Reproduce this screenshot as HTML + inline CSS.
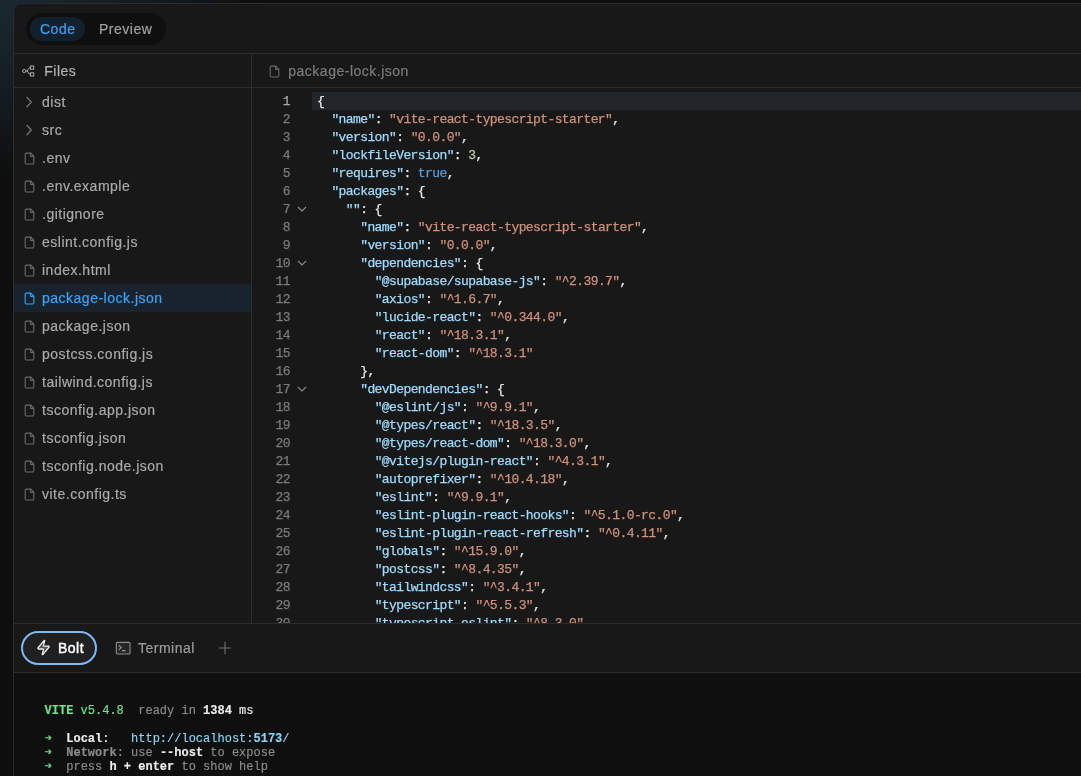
<!DOCTYPE html>
<html><head><meta charset="utf-8">
<style>
*{box-sizing:border-box;margin:0;padding:0}
html,body{width:1081px;height:776px;overflow:hidden}
body{background:#0e0e0e;font-family:"Liberation Sans",sans-serif;position:relative;letter-spacing:0.5px}
.bgglow{position:absolute;left:0;top:0;width:1081px;height:776px;background:radial-gradient(ellipse 260px 175px at 0 0,#1a2830 0%,#151d23 50%,#0e0e0e 100%)}
.panel{will-change:transform;position:absolute;left:13px;top:3px;width:1100px;height:800px;background:#181818;border:1px solid #2c2c2c;border-radius:8px 0 0 0;overflow:hidden}
.hdr{position:absolute;left:0;top:0;width:1100px;height:50px;border-bottom:1px solid #2c2c2c}
.seg{position:absolute;left:12px;top:9px;width:140px;height:32px;border-radius:16px;background:#0f0f0f}
.seg .a{position:absolute;left:4px;top:4px;width:55px;height:24px;border-radius:12px;background:#11202c}
.seg span{position:absolute;top:8px;font-size:14px;line-height:16px;-webkit-text-stroke:0.2px}
.side{position:absolute;left:0;top:50px;width:238px;height:569px;border-right:1px solid #2c2c2c}
.sh{position:absolute;left:0;top:0;width:237px;height:34px;border-bottom:1px solid #2c2c2c}
.sh span{position:absolute;left:30.3px;top:9px;font-size:14px;color:#b4b4b4;line-height:16px;-webkit-text-stroke:0.2px}
.sh svg{position:absolute;left:8px;top:11px}
.fl{position:absolute;left:0;top:34px;width:237px}
.fi{position:relative;height:28px;font-size:14px;color:#a9a9a9;-webkit-text-stroke:0.2px;line-height:28px;padding-left:28px;white-space:nowrap}
.fi svg{position:absolute;left:9px;top:8px}
.fi.sel{background:#18232d;color:#3aa3f7}
.ed{position:absolute;left:238px;top:50px;width:900px;height:569px;overflow:hidden}
.eh{position:absolute;left:0;top:0;width:900px;height:34px;border-bottom:1px solid #2c2c2c}
.eh span{position:absolute;left:36.3px;top:8.8px;font-size:14px;color:#7c7c7c;line-height:16px;-webkit-text-stroke:0.2px}
.eh svg{position:absolute;left:16.4px;top:10.5px}
.code{position:absolute;left:0;top:38px;width:900px;height:531px;font-family:"Liberation Mono",monospace;font-size:13px;letter-spacing:-0.6px;line-height:18px;color:#e6e6e6;white-space:pre;-webkit-text-stroke:0.25px}
.code>div,.code>svg{position:absolute}
.ln{left:0;width:38px;text-align:right;color:#7a7a7a;margin-top:1px}
.ln.cur{color:#a8a8a8}
.tx{left:65px;margin-top:1px}
.hl{left:60px;width:840px;height:18px;background:#22252a}
.fold{left:45.2px}
.k{color:#9cdcfe}.s{color:#ce9178}.n{color:#b5cea8}.b{color:#569cd6}
.bot{position:absolute;left:0;top:619px;width:1100px;height:200px;border-top:1px solid #2c2c2c}
.tb{position:absolute;left:0;top:0;width:1100px;height:49px;border-bottom:1px solid #2c2c2c}
.pill{position:absolute;left:7px;top:7px;width:76px;height:34px;border-radius:17px;border:2px solid #7db9f5;background:#202020}
.tb span{position:absolute;font-size:14px;line-height:16px;-webkit-text-stroke:0.2px}
.term{position:absolute;left:0;top:49px;width:1100px;height:200px;background:#0f0f0f}
.tt{letter-spacing:0;position:absolute;left:30.6px;font-family:"Liberation Mono",monospace;font-size:12px;line-height:14px;white-space:pre;color:#8c8c8c;-webkit-text-stroke:0.15px}
.tt b{font-weight:bold}
.g{color:#6ae68a}.gw{color:#ececec}.cy{color:#86d6f6}.ar{color:#62d27e}
</style></head><body>
<div class="bgglow"></div>
<div class="panel">
  <div class="hdr">
    <div class="seg"><div class="a"></div>
      <span style="left:14px;color:#3aa2f5">Code</span>
      <span style="left:73px;color:#a2a2a2">Preview</span>
    </div>
  </div>
  <div class="side">
    <div class="sh"><svg width="13" height="12" viewBox="0 0 13 12"><circle cx="2.2" cy="6" r="1.6" fill="none" stroke="#a8a8a8" stroke-width="1"/><rect x="8.5" y="1" width="3.2" height="3.2" fill="none" stroke="#a8a8a8" stroke-width="1"/><rect x="8.5" y="7.8" width="3.2" height="3.2" fill="none" stroke="#a8a8a8" stroke-width="1"/><path d="M3.8 6 H5.4 M5.2 6 Q6.2 2.8 8.5 2.6 M5.2 6 Q6.2 9.2 8.5 9.4" fill="none" stroke="#a8a8a8" stroke-width="1"/></svg><span>Files</span></div>
    <div class="fl">
<div class="fi"><svg width="12" height="13" viewBox="0 0 12 13"><path d="M4 1.5 L8.3 6.1 L4 10.7" fill="none" stroke="#707070" stroke-width="1.4" stroke-linecap="round" stroke-linejoin="round"/></svg>dist</div>
<div class="fi"><svg width="12" height="13" viewBox="0 0 12 13"><path d="M4 1.5 L8.3 6.1 L4 10.7" fill="none" stroke="#707070" stroke-width="1.4" stroke-linecap="round" stroke-linejoin="round"/></svg>src</div>
<div class="fi"><svg style="left:8.7px;top:7.8px" width="13" height="13" viewBox="0 0 24 24"><path d="M14.5 2H6a2 2 0 0 0-2 2v16a2 2 0 0 0 2 2h12a2 2 0 0 0 2-2V7.5Z" fill="none" stroke="#6c6c6c" stroke-width="2" stroke-linejoin="round"/><path d="M14 2.5v5.5h5.5" fill="none" stroke="#6c6c6c" stroke-width="2" stroke-linejoin="round" stroke-linecap="round"/></svg>.env</div>
<div class="fi"><svg style="left:8.7px;top:7.8px" width="13" height="13" viewBox="0 0 24 24"><path d="M14.5 2H6a2 2 0 0 0-2 2v16a2 2 0 0 0 2 2h12a2 2 0 0 0 2-2V7.5Z" fill="none" stroke="#6c6c6c" stroke-width="2" stroke-linejoin="round"/><path d="M14 2.5v5.5h5.5" fill="none" stroke="#6c6c6c" stroke-width="2" stroke-linejoin="round" stroke-linecap="round"/></svg>.env.example</div>
<div class="fi"><svg style="left:8.7px;top:7.8px" width="13" height="13" viewBox="0 0 24 24"><path d="M14.5 2H6a2 2 0 0 0-2 2v16a2 2 0 0 0 2 2h12a2 2 0 0 0 2-2V7.5Z" fill="none" stroke="#6c6c6c" stroke-width="2" stroke-linejoin="round"/><path d="M14 2.5v5.5h5.5" fill="none" stroke="#6c6c6c" stroke-width="2" stroke-linejoin="round" stroke-linecap="round"/></svg>.gitignore</div>
<div class="fi"><svg style="left:8.7px;top:7.8px" width="13" height="13" viewBox="0 0 24 24"><path d="M14.5 2H6a2 2 0 0 0-2 2v16a2 2 0 0 0 2 2h12a2 2 0 0 0 2-2V7.5Z" fill="none" stroke="#6c6c6c" stroke-width="2" stroke-linejoin="round"/><path d="M14 2.5v5.5h5.5" fill="none" stroke="#6c6c6c" stroke-width="2" stroke-linejoin="round" stroke-linecap="round"/></svg>eslint.config.js</div>
<div class="fi"><svg style="left:8.7px;top:7.8px" width="13" height="13" viewBox="0 0 24 24"><path d="M14.5 2H6a2 2 0 0 0-2 2v16a2 2 0 0 0 2 2h12a2 2 0 0 0 2-2V7.5Z" fill="none" stroke="#6c6c6c" stroke-width="2" stroke-linejoin="round"/><path d="M14 2.5v5.5h5.5" fill="none" stroke="#6c6c6c" stroke-width="2" stroke-linejoin="round" stroke-linecap="round"/></svg>index.html</div>
<div class="fi sel"><svg style="left:8.7px;top:7.8px" width="13" height="13" viewBox="0 0 24 24"><path d="M14.5 2H6a2 2 0 0 0-2 2v16a2 2 0 0 0 2 2h12a2 2 0 0 0 2-2V7.5Z" fill="none" stroke="#3aa3f7" stroke-width="2" stroke-linejoin="round"/><path d="M14 2.5v5.5h5.5" fill="none" stroke="#3aa3f7" stroke-width="2" stroke-linejoin="round" stroke-linecap="round"/></svg>package-lock.json</div>
<div class="fi"><svg style="left:8.7px;top:7.8px" width="13" height="13" viewBox="0 0 24 24"><path d="M14.5 2H6a2 2 0 0 0-2 2v16a2 2 0 0 0 2 2h12a2 2 0 0 0 2-2V7.5Z" fill="none" stroke="#6c6c6c" stroke-width="2" stroke-linejoin="round"/><path d="M14 2.5v5.5h5.5" fill="none" stroke="#6c6c6c" stroke-width="2" stroke-linejoin="round" stroke-linecap="round"/></svg>package.json</div>
<div class="fi"><svg style="left:8.7px;top:7.8px" width="13" height="13" viewBox="0 0 24 24"><path d="M14.5 2H6a2 2 0 0 0-2 2v16a2 2 0 0 0 2 2h12a2 2 0 0 0 2-2V7.5Z" fill="none" stroke="#6c6c6c" stroke-width="2" stroke-linejoin="round"/><path d="M14 2.5v5.5h5.5" fill="none" stroke="#6c6c6c" stroke-width="2" stroke-linejoin="round" stroke-linecap="round"/></svg>postcss.config.js</div>
<div class="fi"><svg style="left:8.7px;top:7.8px" width="13" height="13" viewBox="0 0 24 24"><path d="M14.5 2H6a2 2 0 0 0-2 2v16a2 2 0 0 0 2 2h12a2 2 0 0 0 2-2V7.5Z" fill="none" stroke="#6c6c6c" stroke-width="2" stroke-linejoin="round"/><path d="M14 2.5v5.5h5.5" fill="none" stroke="#6c6c6c" stroke-width="2" stroke-linejoin="round" stroke-linecap="round"/></svg>tailwind.config.js</div>
<div class="fi"><svg style="left:8.7px;top:7.8px" width="13" height="13" viewBox="0 0 24 24"><path d="M14.5 2H6a2 2 0 0 0-2 2v16a2 2 0 0 0 2 2h12a2 2 0 0 0 2-2V7.5Z" fill="none" stroke="#6c6c6c" stroke-width="2" stroke-linejoin="round"/><path d="M14 2.5v5.5h5.5" fill="none" stroke="#6c6c6c" stroke-width="2" stroke-linejoin="round" stroke-linecap="round"/></svg>tsconfig.app.json</div>
<div class="fi"><svg style="left:8.7px;top:7.8px" width="13" height="13" viewBox="0 0 24 24"><path d="M14.5 2H6a2 2 0 0 0-2 2v16a2 2 0 0 0 2 2h12a2 2 0 0 0 2-2V7.5Z" fill="none" stroke="#6c6c6c" stroke-width="2" stroke-linejoin="round"/><path d="M14 2.5v5.5h5.5" fill="none" stroke="#6c6c6c" stroke-width="2" stroke-linejoin="round" stroke-linecap="round"/></svg>tsconfig.json</div>
<div class="fi"><svg style="left:8.7px;top:7.8px" width="13" height="13" viewBox="0 0 24 24"><path d="M14.5 2H6a2 2 0 0 0-2 2v16a2 2 0 0 0 2 2h12a2 2 0 0 0 2-2V7.5Z" fill="none" stroke="#6c6c6c" stroke-width="2" stroke-linejoin="round"/><path d="M14 2.5v5.5h5.5" fill="none" stroke="#6c6c6c" stroke-width="2" stroke-linejoin="round" stroke-linecap="round"/></svg>tsconfig.node.json</div>
<div class="fi"><svg style="left:8.7px;top:7.8px" width="13" height="13" viewBox="0 0 24 24"><path d="M14.5 2H6a2 2 0 0 0-2 2v16a2 2 0 0 0 2 2h12a2 2 0 0 0 2-2V7.5Z" fill="none" stroke="#6c6c6c" stroke-width="2" stroke-linejoin="round"/><path d="M14 2.5v5.5h5.5" fill="none" stroke="#6c6c6c" stroke-width="2" stroke-linejoin="round" stroke-linecap="round"/></svg>vite.config.ts</div>
    </div>
  </div>
  <div class="ed">
    <div class="eh"><svg width="13" height="13" viewBox="0 0 24 24"><path d="M14.5 2H6a2 2 0 0 0-2 2v16a2 2 0 0 0 2 2h12a2 2 0 0 0 2-2V7.5Z" fill="none" stroke="#686868" stroke-width="2" stroke-linejoin="round"/><path d="M14 2.5v5.5h5.5" fill="none" stroke="#686868" stroke-width="2" stroke-linejoin="round" stroke-linecap="round"/></svg><span>package-lock.json</span></div>
    <div class="code">
<div class="hl" style="top:0px"></div>
<div class="ln cur" style="top:0px">1</div>
<div class="tx" style="top:0px">{</div>
<div class="ln" style="top:18px">2</div>
<div class="tx" style="top:18px">  <span class="k">&quot;name&quot;</span>: <span class="s">&quot;vite-react-typescript-starter&quot;</span>,</div>
<div class="ln" style="top:36px">3</div>
<div class="tx" style="top:36px">  <span class="k">&quot;version&quot;</span>: <span class="s">&quot;0.0.0&quot;</span>,</div>
<div class="ln" style="top:54px">4</div>
<div class="tx" style="top:54px">  <span class="k">&quot;lockfileVersion&quot;</span>: <span class="n">3</span>,</div>
<div class="ln" style="top:72px">5</div>
<div class="tx" style="top:72px">  <span class="k">&quot;requires&quot;</span>: <span class="b">true</span>,</div>
<div class="ln" style="top:90px">6</div>
<div class="tx" style="top:90px">  <span class="k">&quot;packages&quot;</span>: {</div>
<div class="ln" style="top:108px">7</div>
<svg class="fold" style="top:112.5px" width="10" height="8" viewBox="0 0 10 8"><path d="M1 2 L5 6 L9 2" fill="none" stroke="#8a8a8a" stroke-width="1.1"/></svg>
<div class="tx" style="top:108px">    <span class="k">&quot;&quot;</span>: {</div>
<div class="ln" style="top:126px">8</div>
<div class="tx" style="top:126px">      <span class="k">&quot;name&quot;</span>: <span class="s">&quot;vite-react-typescript-starter&quot;</span>,</div>
<div class="ln" style="top:144px">9</div>
<div class="tx" style="top:144px">      <span class="k">&quot;version&quot;</span>: <span class="s">&quot;0.0.0&quot;</span>,</div>
<div class="ln" style="top:162px">10</div>
<svg class="fold" style="top:166.5px" width="10" height="8" viewBox="0 0 10 8"><path d="M1 2 L5 6 L9 2" fill="none" stroke="#8a8a8a" stroke-width="1.1"/></svg>
<div class="tx" style="top:162px">      <span class="k">&quot;dependencies&quot;</span>: {</div>
<div class="ln" style="top:180px">11</div>
<div class="tx" style="top:180px">        <span class="k">&quot;@supabase/supabase-js&quot;</span>: <span class="s">&quot;^2.39.7&quot;</span>,</div>
<div class="ln" style="top:198px">12</div>
<div class="tx" style="top:198px">        <span class="k">&quot;axios&quot;</span>: <span class="s">&quot;^1.6.7&quot;</span>,</div>
<div class="ln" style="top:216px">13</div>
<div class="tx" style="top:216px">        <span class="k">&quot;lucide-react&quot;</span>: <span class="s">&quot;^0.344.0&quot;</span>,</div>
<div class="ln" style="top:234px">14</div>
<div class="tx" style="top:234px">        <span class="k">&quot;react&quot;</span>: <span class="s">&quot;^18.3.1&quot;</span>,</div>
<div class="ln" style="top:252px">15</div>
<div class="tx" style="top:252px">        <span class="k">&quot;react-dom&quot;</span>: <span class="s">&quot;^18.3.1&quot;</span></div>
<div class="ln" style="top:270px">16</div>
<div class="tx" style="top:270px">      },</div>
<div class="ln" style="top:288px">17</div>
<svg class="fold" style="top:292.5px" width="10" height="8" viewBox="0 0 10 8"><path d="M1 2 L5 6 L9 2" fill="none" stroke="#8a8a8a" stroke-width="1.1"/></svg>
<div class="tx" style="top:288px">      <span class="k">&quot;devDependencies&quot;</span>: {</div>
<div class="ln" style="top:306px">18</div>
<div class="tx" style="top:306px">        <span class="k">&quot;@eslint/js&quot;</span>: <span class="s">&quot;^9.9.1&quot;</span>,</div>
<div class="ln" style="top:324px">19</div>
<div class="tx" style="top:324px">        <span class="k">&quot;@types/react&quot;</span>: <span class="s">&quot;^18.3.5&quot;</span>,</div>
<div class="ln" style="top:342px">20</div>
<div class="tx" style="top:342px">        <span class="k">&quot;@types/react-dom&quot;</span>: <span class="s">&quot;^18.3.0&quot;</span>,</div>
<div class="ln" style="top:360px">21</div>
<div class="tx" style="top:360px">        <span class="k">&quot;@vitejs/plugin-react&quot;</span>: <span class="s">&quot;^4.3.1&quot;</span>,</div>
<div class="ln" style="top:378px">22</div>
<div class="tx" style="top:378px">        <span class="k">&quot;autoprefixer&quot;</span>: <span class="s">&quot;^10.4.18&quot;</span>,</div>
<div class="ln" style="top:396px">23</div>
<div class="tx" style="top:396px">        <span class="k">&quot;eslint&quot;</span>: <span class="s">&quot;^9.9.1&quot;</span>,</div>
<div class="ln" style="top:414px">24</div>
<div class="tx" style="top:414px">        <span class="k">&quot;eslint-plugin-react-hooks&quot;</span>: <span class="s">&quot;^5.1.0-rc.0&quot;</span>,</div>
<div class="ln" style="top:432px">25</div>
<div class="tx" style="top:432px">        <span class="k">&quot;eslint-plugin-react-refresh&quot;</span>: <span class="s">&quot;^0.4.11&quot;</span>,</div>
<div class="ln" style="top:450px">26</div>
<div class="tx" style="top:450px">        <span class="k">&quot;globals&quot;</span>: <span class="s">&quot;^15.9.0&quot;</span>,</div>
<div class="ln" style="top:468px">27</div>
<div class="tx" style="top:468px">        <span class="k">&quot;postcss&quot;</span>: <span class="s">&quot;^8.4.35&quot;</span>,</div>
<div class="ln" style="top:486px">28</div>
<div class="tx" style="top:486px">        <span class="k">&quot;tailwindcss&quot;</span>: <span class="s">&quot;^3.4.1&quot;</span>,</div>
<div class="ln" style="top:504px">29</div>
<div class="tx" style="top:504px">        <span class="k">&quot;typescript&quot;</span>: <span class="s">&quot;^5.5.3&quot;</span>,</div>
<div class="ln" style="top:522px">30</div>
<div class="tx" style="top:522px">        <span class="k">&quot;typescript-eslint&quot;</span>: <span class="s">&quot;^8.3.0&quot;</span>,</div>
    </div>
  </div>
  <div class="bot">
    <div class="tb">
      <div class="pill"></div>
      <svg style="position:absolute;left:21.8px;top:15px" width="15" height="17" viewBox="0 0 24 24" preserveAspectRatio="none"><path d="M4 14a1 1 0 0 1-.78-1.63l9.9-10.2a.5.5 0 0 1 .86.46l-1.920 6.02A1 1 0 0 0 13 10h7a1 1 0 0 1 .78 1.630l-9.9 10.2a.5.5 0 0 1-.86-.46l1.92-6.02A1 1 0 0 0 11 14z" fill="#555" stroke="#f0f0f0" stroke-width="2" stroke-linejoin="round"/></svg>
      <span style="left:44px;top:16px;color:#ffffff;-webkit-text-stroke:0.45px #fff">Bolt</span>
      <svg style="position:absolute;left:101px;top:17px" width="16" height="14" viewBox="0 0 16 14"><rect x="1.35" y="1.35" width="13.7" height="11.6" rx="1" fill="#262626" stroke="#8c8c8c" stroke-width="1.1"/><path d="M3.8 4.3 L6.3 6.6 L3.8 8.9 M7 9.6 H10.5" fill="none" stroke="#9a9a9a" stroke-width="1.1"/></svg>
      <span style="left:124px;top:16px;color:#9c9c9c">Terminal</span>
      <svg style="position:absolute;left:204px;top:17px" width="14" height="14" viewBox="0 0 14 14"><path d="M7 1 V13 M1 7 H13" fill="none" stroke="#6e6e6e" stroke-width="1.2"/></svg>
    </div>
    <div class="term">
<div class="tt" style="top:31px"><b class="g">VITE</b><span class="g"> v5.4.8</span>  ready in <b class="gw">1384</b><span class="gw"> ms</span></div>
<div class="tt" style="top:59px"><span class="ar">➜</span>  <b class="gw">Local</b><span class="gw">:</span>   <span class="cy">http://localhost:</span><b class="cy">5173</b><span class="cy">/</span></div>
<div class="tt" style="top:73px"><span class="ar">➜</span>  <b>Network</b>: use <b class="gw">--host</b> to expose</div>
<div class="tt" style="top:87px"><span class="ar">➜</span>  press <b class="gw">h + enter</b> to show help</div>
    </div>
  </div>
</div>
</body></html>
